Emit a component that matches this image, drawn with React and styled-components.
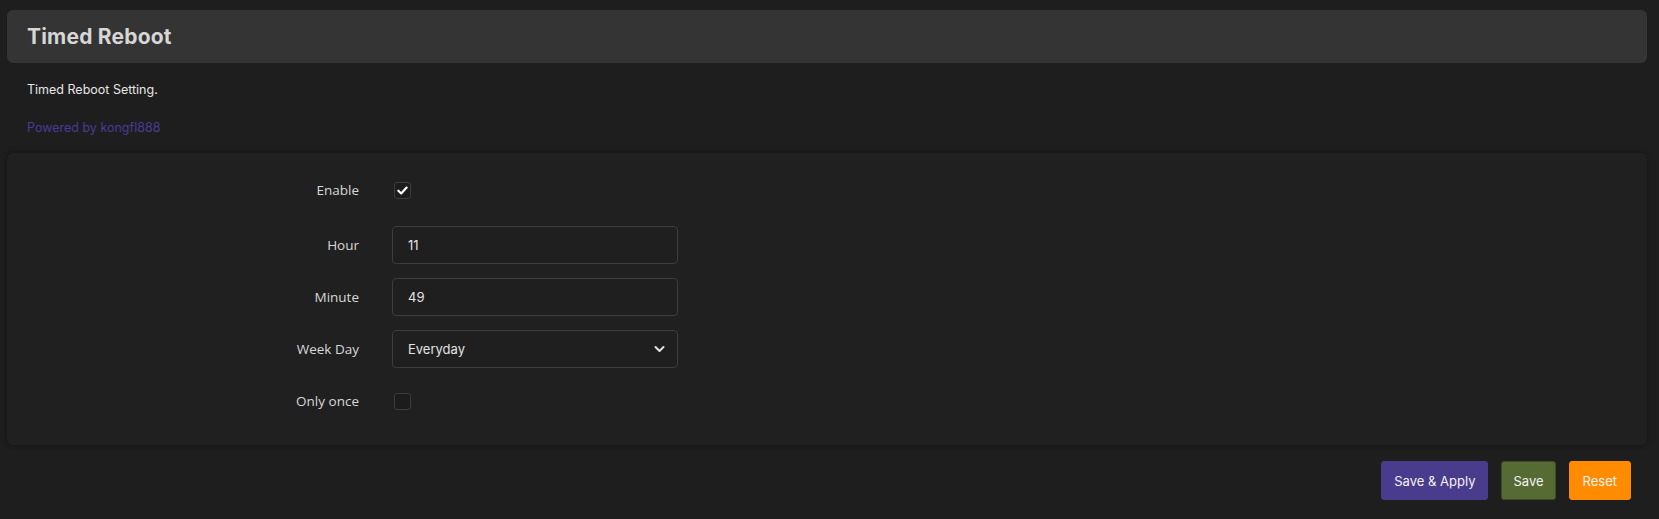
import React from 'react';
import styled, { createGlobalStyle } from 'styled-components';

const GlobalStyle = createGlobalStyle`
  html, body {
    margin: 0;
    padding: 0;
    background: #1e1e1e;
  }
  body {
    font-family: 'Inter', 'Open Sans', sans-serif;
    color: #dcdcdc;
  }
`;

const Page = styled.div`
  padding: 10px 12px 20px 7px;
`;

const Header = styled.div`
  background: #343434;
  border-radius: 6px;
  height: 53px;
  display: flex;
  align-items: center;
  padding: 0 20px;
`;

const Title = styled.h2`
  margin: 0;
  font-family: 'Inter', sans-serif;
  font-size: 21px;
  font-weight: 700;
  color: #d6d6d6;
  letter-spacing: 0.2px;
`;

const Description = styled.div`
  padding: 17px 20px 0;
  font-size: 12.5px;
  color: #e6e6e6;
  line-height: 20px;
`;

const Powered = styled.a`
  display: block;
  padding: 18px 20px 0;
  font-size: 12.5px;
  color: #4a3b9a;
  text-decoration: none;
  line-height: 20px;
`;

const Panel = styled.div`
  margin-top: 15px;
  background: #202020;
  border-radius: 6px;
  box-shadow: 0 0 6px rgba(0, 0, 0, 0.35);
  padding: 15px 0 25px;
  display: flex;
  flex-direction: column;
  gap: 14px;
`;

const Row = styled.div`
  display: grid;
  grid-template-columns: 352px 286px;
  column-gap: 33px;
  align-items: center;
  height: ${p => (p.tall ? '44px' : '38px')};
`;

const Label = styled.label`
  text-align: right;
  font-family: 'Open Sans', sans-serif;
  font-size: 13.5px;
  color: #d8d8d8;
`;

const Field = styled.div`
  display: flex;
  align-items: center;
  height: 100%;
`;

const Box = styled.span`
  width: 15px;
  height: 15px;
  margin-left: 2px;
  border: 1px solid #3c3c3c;
  border-radius: 3px;
  background: #1c1c1c;
  display: flex;
  align-items: center;
  justify-content: center;
`;

const Input = styled.div`
  box-sizing: border-box;
  width: 100%;
  height: 100%;
  border: 1px solid #3d3d3d;
  border-radius: 4px;
  background: #1f1f1f;
  display: flex;
  align-items: center;
  justify-content: space-between;
  padding: 0 12px 0 15px;
  font-size: 13px;
  color: #e4e4e4;
`;

const Actions = styled.div`
  display: flex;
  justify-content: flex-end;
  gap: 13px;
  padding: 16px 16px 0;
`;

const Button = styled.button`
  height: 39px;
  padding: 0 ${p => p.pad || 12}px;
  border: 1px solid ${p => p.border};
  border-radius: 3px;
  background: ${p => p.bg};
  color: #f2f2f2;
  font-family: 'Inter', sans-serif;
  font-size: 13px;
  cursor: pointer;
`;

const Check = ({ checked }) => (
  <Box>
    {checked && (
      <svg width="11" height="11" viewBox="0 0 12 12">
        <path d="M1.5 6.3 L4.6 9.2 L10.5 2.8" fill="none" stroke="#fff" strokeWidth="2.4" strokeLinecap="round" strokeLinejoin="round" />
      </svg>
    )}
  </Box>
);

export default function App() {
  return (
    <Page>
      <GlobalStyle />
      <Header>
        <Title>Timed Reboot</Title>
      </Header>
      <Description>Timed Reboot Setting.</Description>
      <Powered href="#">Powered by kongfl888</Powered>
      <Panel>
        <Row tall>
          <Label>Enable</Label>
          <Field><Check checked /></Field>
        </Row>
        <Row>
          <Label>Hour</Label>
          <Input>11</Input>
        </Row>
        <Row>
          <Label>Minute</Label>
          <Input>49</Input>
        </Row>
        <Row>
          <Label>Week Day</Label>
          <Input>
            Everyday
            <svg width="11" height="8" viewBox="0 0 11 8">
              <path d="M1.5 2 L5.5 6 L9.5 2" fill="none" stroke="#e0e0e0" strokeWidth="2" strokeLinecap="round" strokeLinejoin="round" />
            </svg>
          </Input>
        </Row>
        <Row>
          <Label>Only once</Label>
          <Field><Check /></Field>
        </Row>
      </Panel>
      <Actions>
        <Button bg="#4a3c8c" border="#4a3c8c" pad={12}>Save &amp; Apply</Button>
        <Button bg="#566a33" border="#3f4a2c" pad={11}>Save</Button>
        <Button bg="#ff8c00" border="#ff8c00" pad={13}>Reset</Button>
      </Actions>
    </Page>
  );
}
